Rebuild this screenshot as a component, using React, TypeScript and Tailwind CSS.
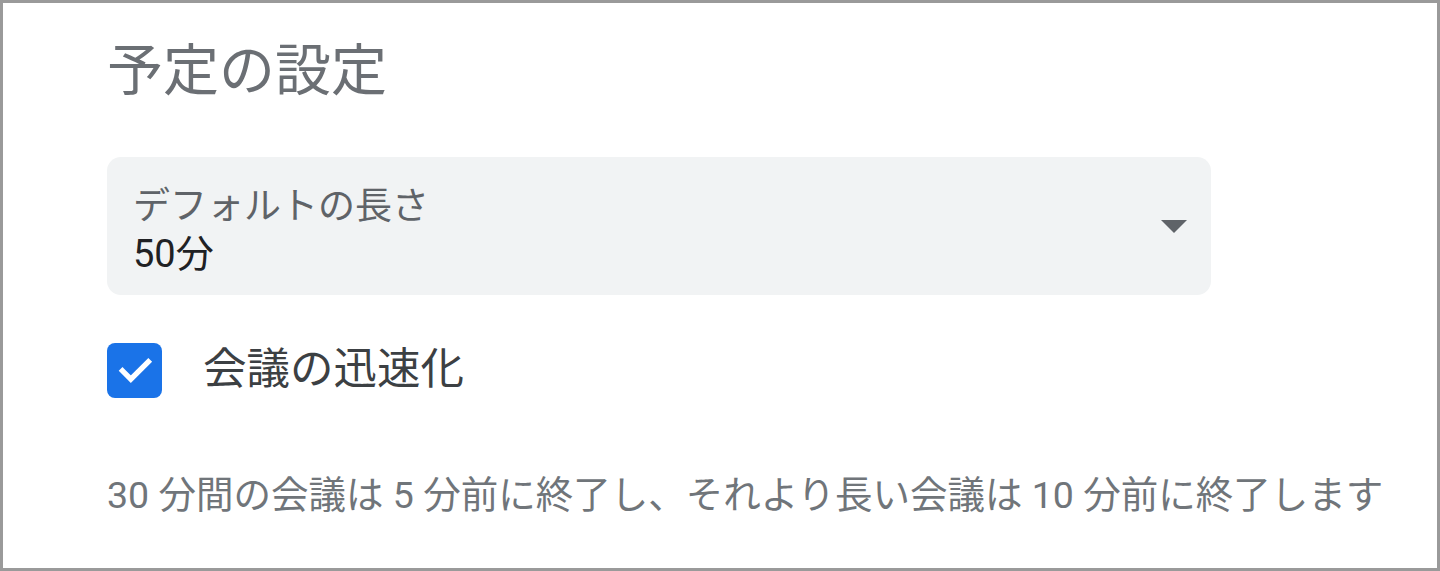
import React from "react";

export default function App() {
  const font = { fontFamily: "Roboto, 'Noto Sans CJK JP', 'Noto Sans', sans-serif" };
  return (
    <div
      className="w-[1440px] h-[571px] bg-white border-[3px] border-[#9a9a9a] box-border overflow-hidden"
      style={font}
    >
      <div className="pl-[104px] pt-[32px] pr-[226px]">
        <h1 className="text-[56px] leading-[72px] text-[#6b6f74] font-normal">予定の設定</h1>
        <div className="mt-[50px] h-[138px] rounded-[14px] bg-[#f1f3f4] flex items-center pl-[26px] pr-[24px]">
          <div className="flex-1 flex flex-col pt-[12px]">
            <span className="text-[37px] leading-[44px] text-[#5f6368]">デフォルトの長さ</span>
            <span className="text-[38px] leading-[50px] text-[#202124]">50分</span>
          </div>
          <div className="w-0 h-0 border-l-[13px] border-r-[13px] border-t-[13px] border-l-transparent border-r-transparent border-t-[#5f6368]" />
        </div>
        <div className="mt-[47px] flex items-center">
          <div className="w-[55px] h-[55px] rounded-[8px] bg-[#1a73e8] flex items-center justify-center">
            <svg width="40" height="40" viewBox="0 0 24 24" fill="none">
              <path d="M4.5 12.5l5 5L20 7" stroke="white" strokeWidth="3.2" strokeLinecap="square" />
            </svg>
          </div>
          <span className="ml-[41px] text-[43.5px] leading-[56px] text-[#3c4043]">会議の迅速化</span>
        </div>
        <p className="mt-[73px] text-[37.5px] leading-[48px] text-[#70757a] whitespace-nowrap">
          30 分間の会議は 5 分前に終了し、それより長い会議は 10 分前に終了します
        </p>
      </div>
    </div>
  );
}
